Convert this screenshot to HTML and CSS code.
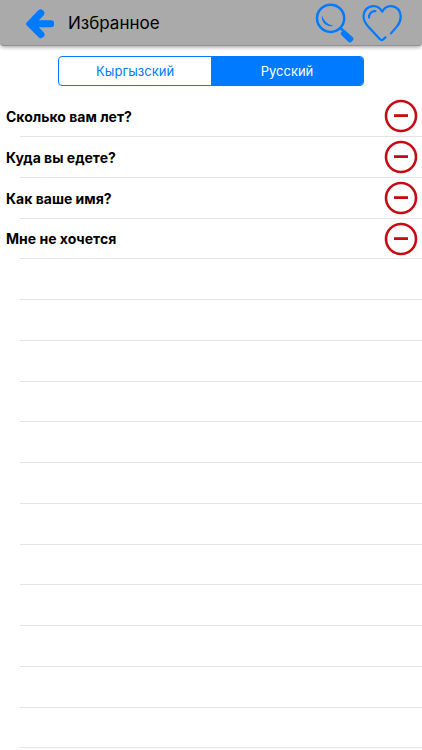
FILE: index.html
```
<!DOCTYPE html>
<html lang="ru">
<head>
    <meta charset="UTF-8">
    <meta name="viewport" content="width=device-width, initial-scale=1.0">
    <title>Избранное</title>
    <link rel="stylesheet" href="styles.css">
</head>
<body>

    <!-- Icon used by every phrase row -->
    <svg class="sprite" aria-hidden="true">
        <symbol id="minus" viewBox="0 0 34 34">
            <circle cx="17" cy="17" r="15" fill="none" stroke="currentColor" stroke-width="2.6"/>
            <path d="M10 16.6h14" fill="none" stroke="currentColor" stroke-width="2.8"/>
        </symbol>
    </svg>

    <header class="topbar">
        <button type="button" class="icon-btn back" aria-label="Назад">
            <svg width="30" height="32" viewBox="0 0 30 32">
                <path d="M1.6 14.4L13.6 2.1Q15.7 .3 17.9 2.3L18.8 3.3Q20.6 5.3 18.8 7.3L13.8 12.2H26.2Q29 12.2 29 14.8V16.8Q29 19.2 26.2 19.2H13.8L18.8 24.4Q20.6 26.4 18.8 28.4L17.9 29.3Q15.7 31.2 13.6 29.3L1.6 17.2Q.3 15.8 1.6 14.4Z" fill="currentColor"/>
            </svg>
        </button>
        <h1 class="title">Избранное</h1>
        <button type="button" class="icon-btn" aria-label="Поиск">
            <svg width="40" height="40" viewBox="0 0 40 40">
                <circle cx="15.6" cy="15.3" r="13.6" fill="none" stroke="currentColor" stroke-width="2.5"/>
                <path d="M7 12.5C5.7 19 12 25.2 18.8 22.6C13.5 22.4 9 18.3 7 12.5Z" fill="currentColor"/>
                <path d="M24.6 24.2l4 4" stroke="currentColor" stroke-width="2.6"/>
                <path d="M28.2 27.2Q29.5 26.8 30.5 27.7L37.7 34.3Q38.9 35.6 38.2 37L36 39.2Q34.6 39.9 33.3 38.7L26.3 32Q25.4 31 25.8 29.8Z" fill="currentColor"/>
            </svg>
        </button>
        <button type="button" class="icon-btn heart" aria-label="Избранное">
            <svg width="40" height="40" viewBox="0 0 40 40" fill="none" stroke="currentColor" stroke-width="2.2" stroke-linecap="round" stroke-linejoin="round">
                <path d="M29 30.4L35 23.4C38.2 19.5 39 16.5 38.6 12.6C37.5 2.3 25.3-.4 20.2 8.6C15-.4 2.6 2.3 1.6 12.6C1.2 16.5 3 20 6.4 23.8L17.8 36C19.2 37.5 20.5 37.3 21.5 36.3L23.4 34.4"/>
                <path d="M7 14.6C7 10.5 9.8 7.8 13.4 8.1"/>
            </svg>
        </button>
    </header>

    <main>
        <div class="segment" role="radiogroup" aria-label="Язык">
            <input type="radio" name="lang" id="langKg">
            <label for="langKg">Кыргызский</label>
            <input type="radio" name="lang" id="langRu" checked>
            <label for="langRu">Русский</label>
        </div>

        <ul class="phrases">
            <li>
                <span>Сколько вам лет?</span>
                <button type="button" class="remove" aria-label="Удалить"><svg><use href="#minus"/></svg></button>
            </li>
            <li>
                <span>Куда вы едете?</span>
                <button type="button" class="remove" aria-label="Удалить"><svg><use href="#minus"/></svg></button>
            </li>
            <li>
                <span>Как ваше имя?</span>
                <button type="button" class="remove" aria-label="Удалить"><svg><use href="#minus"/></svg></button>
            </li>
            <li>
                <span>Мне не хочется</span>
                <button type="button" class="remove" aria-label="Удалить"><svg><use href="#minus"/></svg></button>
            </li>
            <!-- Empty rows -->
            <li></li>
            <li></li>
            <li></li>
            <li></li>
            <li></li>
            <li></li>
            <li></li>
            <li></li>
            <li></li>
            <li></li>
            <li></li>
            <li></li>
        </ul>
    </main>

</body>
</html>
```

FILE: styles.css
```
/* Global styles */
* {
    box-sizing: border-box;
}

body {
    margin: 0;
    font-family: Inter, Roboto, sans-serif;
    background-color: #fff;
    color: #000;
}

button {
    padding: 0;
    border: none;
    background: none;
    cursor: pointer;
}

.sprite {
    display: none;
}

/* Top bar */
.topbar {
    display: flex;
    align-items: center;
    height: 46px;
    padding: 0 20px 0 25px;
    background-color: #aaa;
    border-bottom: 1px solid #909090;
    border-radius: 0 0 4px 4px;
    box-shadow: 0 1px 4px rgba(0, 0, 0, 0.4);
}

.icon-btn {
    display: flex;
    color: #007aff;
}

.back {
    margin-top: 2px;
}

.heart {
    margin-left: 7px;
}

.title {
    flex: 1;
    margin: 0 0 0 13px;
    font-size: 17px;
    font-weight: 400;
}

/* Language switch */
.segment {
    display: flex;
    height: 30px;
    margin: 10px 58px;
    border: 1px solid #007aff;
    border-radius: 4px;
    overflow: hidden;
}

.segment input {
    position: absolute;
    opacity: 0;
    pointer-events: none;
}

.segment label {
    flex: 1;
    color: #007aff;
    font-size: 13px;
    line-height: 28px;
    text-align: center;
    cursor: pointer;
}

.segment input:checked + label {
    background-color: #007aff;
    color: #fff;
}

/* Phrase list */
.phrases {
    margin: 0;
    padding: 0;
    list-style: none;
}

.phrases li {
    display: flex;
    align-items: center;
    justify-content: space-between;
    height: 41px;
    padding: 0 4px 1px 6px;
    font-size: 14px;
    font-weight: 700;
    /* separator starts 20px from the left edge */
    background: linear-gradient(#e4e4e4, #e4e4e4) 20px 100% / 100% 1px no-repeat;
}

.phrases li:nth-child(4n) {
    height: 40px;
}

/* Remove button */
.remove {
    display: flex;
    color: #c60c12;
}

.remove svg {
    width: 34px;
    height: 34px;
}
```
